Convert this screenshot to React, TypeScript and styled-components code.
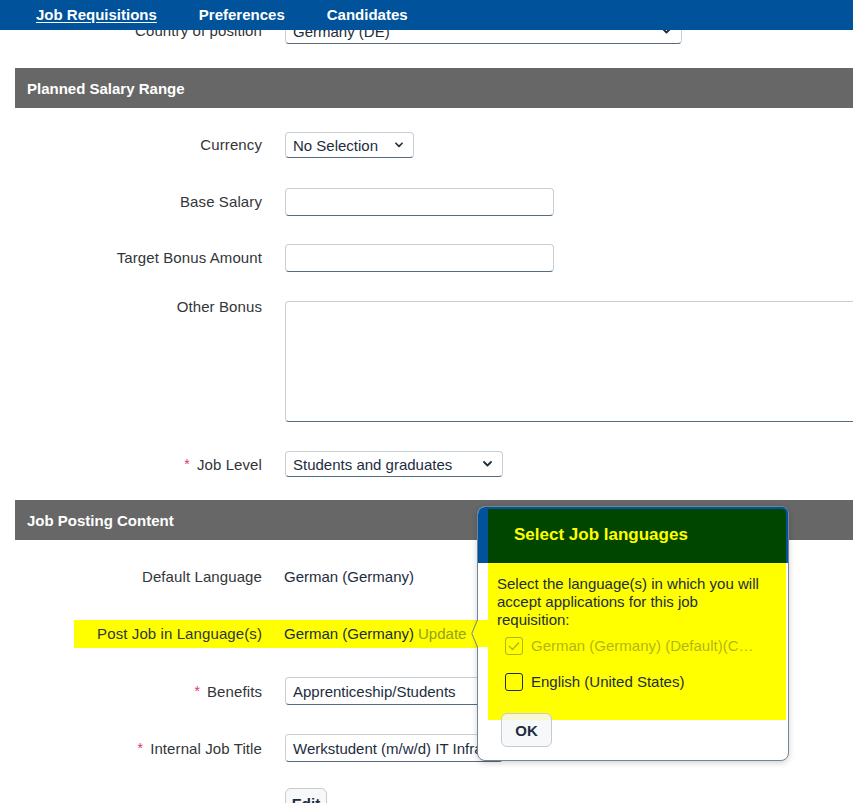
import React from "react";
import styled, { createGlobalStyle } from "styled-components";

const Global = createGlobalStyle`
  html, body { margin: 0; padding: 0; background: #fff; }
  body {
    font-family: "Liberation Sans", Arial, sans-serif;
    font-size: 15px;
    color: #1d2d3e;
    overflow: hidden;
  }
  * { box-sizing: border-box; }
`;

const NavBar = styled.nav`
  position: fixed;
  top: 0;
  left: 0;
  right: 0;
  height: 30px;
  z-index: 10;
  background: #00539b;
  display: flex;
  align-items: center;
  gap: 42px;
  padding-left: 36px;
  padding-bottom: 1px;
`;

const NavLink = styled.a<{ $active?: boolean }>`
  color: #fff;
  font-weight: 700;
  font-size: 15px;
  text-decoration: ${(p) => (p.$active ? "underline" : "none")};
  text-underline-offset: 2px;
  cursor: pointer;
`;

const Page = styled.main`
  position: relative;
  width: 100%;
  min-height: 803px;
  padding-top: 17px;
`;

const Section = styled.section`
  display: flex;
  flex-direction: column;
`;

const SectionHeader = styled.h2`
  margin: 0 0 0 15px;
  height: 40px;
  display: flex;
  align-items: center;
  padding-left: 12px;
  background: #676767;
  color: #fff;
  font-size: 15px;
  font-weight: 700;
`;

const Rows = styled.div<{ $gap: number; $pt: number; $pb: number }>`
  display: flex;
  flex-direction: column;
  gap: ${(p) => p.$gap}px;
  padding: ${(p) => p.$pt}px 0 ${(p) => p.$pb}px;
`;

const Row = styled.div<{ $top?: boolean; $highlight?: boolean }>`
  display: grid;
  grid-template-columns: ${(p) => (p.$highlight ? "188px" : "262px")} 1fr;
  column-gap: 23px;
  align-items: ${(p) => (p.$top ? "start" : "center")};
  min-height: 28px;
  margin-left: ${(p) => (p.$highlight ? "74px" : "0")};
  width: ${(p) => (p.$highlight ? "414px" : "auto")};
  background: ${(p) => (p.$highlight ? "#ffff00" : "transparent")};
`;

const Label = styled.label<{ $top?: boolean }>`
  text-align: right;
  color: #32363a;
  font-size: 15px;
  letter-spacing: 0.1px;
  line-height: 18px;
  white-space: nowrap;
  margin-top: ${(p) => (p.$top ? "-3px" : "0")};
`;

const Req = styled.span`
  color: #e2307c;
  font-size: 14px;
  margin-right: 7px;
  vertical-align: 1px;
`;

const SelectBox = styled.div<{ $w: number }>`
  width: ${(p) => p.$w}px;
  height: 26px;
  display: flex;
  align-items: center;
  justify-content: space-between;
  padding: 0 10px 0 7px;
  border: 1px solid #c8cfd6;
  border-bottom-color: #556b82;
  border-radius: 4px;
  background: #fff;
  color: #1d2d3e;
  font-size: 15px;
`;

const TextInput = styled.div<{ $w: number; $h?: number }>`
  width: ${(p) => p.$w}px;
  height: ${(p) => p.$h ?? 28}px;
  display: flex;
  align-items: center;
  padding: 0 7px;
  border: 1px solid #c8cfd6;
  border-bottom-color: #556b82;
  border-radius: 4px;
  background: #fff;
  color: #1d2d3e;
  font-size: 15px;
  white-space: nowrap;
  overflow: hidden;
`;

const Value = styled.span`
  color: #1d2d3e;
  font-size: 15px;
  line-height: 18px;
  white-space: nowrap;
  margin-left: -1px;
`;

const LinkText = styled.a`
  color: #95a01c;
  margin-left: 4px;
`;

const Button = styled.button`
  font-family: "Liberation Sans", Arial, sans-serif;
  font-size: 15px;
  font-weight: 600;
  color: #1d2d3e;
  background: rgba(246, 247, 248, 0.85);
  border: 1px solid #c5cbd1;
  border-radius: 6px;
  padding: 0;
`;

const EditButton = styled(Button)`
  width: 42px;
  height: 30px;
  margin-top: -4px;
`;

const Popover = styled.div`
  position: absolute;
  left: 477px;
  top: 506px;
  width: 312px;
  height: 255px;
  z-index: 5;
  background: #fff;
  border: 1px solid #72849a;
  border-radius: 8px;
  box-shadow: 0 2px 6px rgba(0, 0, 0, 0.18);
  display: flex;
  flex-direction: column;
`;

const PopHeader = styled.div`
  height: 56px;
  display: flex;
  align-items: center;
  padding-left: 26px;
  background: #004600;
  border-left: 10px solid #00539b;
  border-top-left-radius: 7px;
  border-top-right-radius: 7px;
  box-shadow: inset 0 2px 0 #00539b, inset -2px 0 0 #00539b;
`;

const PopTitle = styled.h3`
  margin: 0;
  color: #ffff00;
  font-size: 17px;
  font-weight: 700;
`;

const PopBody = styled.div`
  padding: 0 2px 0 10px;
`;

const Highlight = styled.div`
  background: #ffff00;
  padding: 12px 12px 29px 9px;
  display: flex;
  flex-direction: column;
`;

const Intro = styled.p`
  margin: 0 0 8px;
  font-size: 15px;
  line-height: 18px;
  color: #1d2d3e;
`;

const CheckRow = styled.div<{ $disabled?: boolean }>`
  display: flex;
  align-items: center;
  gap: 8px;
  height: 18px;
  padding-left: 8px;
  opacity: ${(p) => (p.$disabled ? 0.35 : 1)};
  & + & {
    margin-top: 18px;
  }
`;

const Box = styled.span`
  width: 18px;
  height: 18px;
  border: 1px solid #1d2d3e;
  border-radius: 3px;
  display: flex;
  align-items: center;
  justify-content: center;
  flex: none;
`;

const CheckLabel = styled.span`
  font-size: 15px;
  color: #1d2d3e;
  white-space: nowrap;
  overflow: hidden;
  text-overflow: ellipsis;
  max-width: 228px;
  line-height: 18px;
`;

const PopFooter = styled.div`
  padding-left: 23px;
  margin-top: -7px;
`;

const OkButton = styled(Button)`
  width: 51px;
  height: 34px;
`;

const ArrowSvg = styled.svg`
  position: absolute;
  left: -7px;
  top: 113px;
`;

const Spacer = styled.div<{ $h: number }>`
  height: ${(p) => p.$h}px;
`;

const Chevron = ({ w = 9 }: { w?: number }) => (
  <svg width={w} height={6} viewBox="0 0 9 6">
    <path d="M1 1 L4.5 4.5 L8 1" fill="none" stroke="#1d2d3e" strokeWidth="1.8" strokeLinecap="round" strokeLinejoin="round" />
  </svg>
);

export default function App() {
  return (
    <>
      <Global />
      <NavBar>
        <NavLink $active>Job Requisitions</NavLink>
        <NavLink>Preferences</NavLink>
        <NavLink>Candidates</NavLink>
      </NavBar>
      <Page>
        <Row>
          <Label>Country of position</Label>
          <SelectBox $w={397}>
            <span>Germany (DE)</span>
            <Chevron />
          </SelectBox>
        </Row>
        <Spacer $h={23} />
        <Section>
          <SectionHeader>Planned Salary Range</SectionHeader>
          <Rows $gap={28.5} $pt={23} $pb={22}>
            <Row>
              <Label>Currency</Label>
              <SelectBox $w={129}>
                <span>No Selection</span>
                <Chevron w={8} />
              </SelectBox>
            </Row>
            <Row>
              <Label>Base Salary</Label>
              <TextInput $w={269} />
            </Row>
            <Row>
              <Label>Target Bonus Amount</Label>
              <TextInput $w={269} />
            </Row>
            <Row $top>
              <Label $top>Other Bonus</Label>
              <TextInput $w={600} $h={121} />
            </Row>
            <Row>
              <Label>
                <Req>*</Req>Job Level
              </Label>
              <SelectBox $w={218}>
                <span>Students and graduates</span>
                <Chevron />
              </SelectBox>
            </Row>
          </Rows>
        </Section>
        <Section>
          <SectionHeader>Job Posting Content</SectionHeader>
          <Rows $gap={29} $pt={23} $pb={0}>
            <Row>
              <Label>Default Language</Label>
              <Value>German (Germany)</Value>
            </Row>
            <Row $highlight>
              <Label>Post Job in Language(s)</Label>
              <Value>
                German (Germany)<LinkText>Update</LinkText>
              </Value>
            </Row>
            <Row>
              <Label>
                <Req>*</Req>Benefits
              </Label>
              <TextInput $w={218}>Apprenticeship/Students</TextInput>
            </Row>
            <Row>
              <Label>
                <Req>*</Req>Internal Job Title
              </Label>
              <TextInput $w={218}>Werkstudent (m/w/d) IT Infrastructure</TextInput>
            </Row>
            <Row>
              <span />
              <div>
                <EditButton>Edit</EditButton>
              </div>
            </Row>
          </Rows>
        </Section>

        <Popover>
          <ArrowSvg width="18" height="27" viewBox="0 0 18 27">
            <polygon points="6.5,0 0.5,13.5 6.5,27 18,27 18,0" fill="#ffff00" />
            <polyline points="6.5,0 0.8,13.5 6.5,27" fill="none" stroke="#72849a" strokeWidth="1" />
          </ArrowSvg>
          <PopHeader>
            <PopTitle>Select Job languages</PopTitle>
          </PopHeader>
          <PopBody>
            <Highlight>
              <Intro>Select the language(s) in which you will accept applications for this job requisition:</Intro>
              <CheckRow $disabled>
                <Box>
                  <svg width="12" height="10" viewBox="0 0 12 10">
                    <path d="M1 5 L4.5 8.5 L11 1.5" fill="none" stroke="#1d2d3e" strokeWidth="1.3" />
                  </svg>
                </Box>
                <CheckLabel>German (Germany) (Default)(Corporate)</CheckLabel>
              </CheckRow>
              <CheckRow>
                <Box />
                <CheckLabel>English (United States)</CheckLabel>
              </CheckRow>
            </Highlight>
          </PopBody>
          <PopFooter>
            <OkButton>OK</OkButton>
          </PopFooter>
        </Popover>
      </Page>
    </>
  );
}
